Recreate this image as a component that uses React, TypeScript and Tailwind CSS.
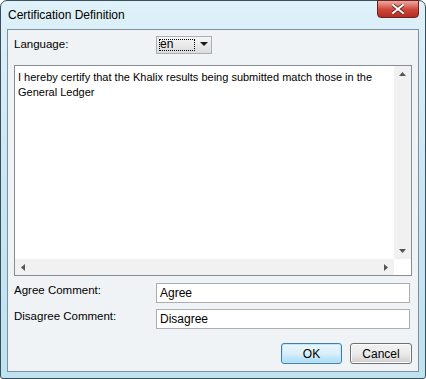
import React from 'react';

const App = () => {
  return (
    <div
      className="w-[426px] h-[379px] bg-white overflow-hidden"
      style={{ fontFamily: '"Liberation Sans", Arial, sans-serif' }}
    >
      <div className="w-[426px] h-[379px] flex flex-col border border-[#3b4e5c] rounded-t-[7px] rounded-b-[3px] bg-gradient-to-b from-[#dff1f9] via-[#c8e6f3] to-[#bfe2f1]">
        {/* title bar */}
        <div className="h-[28px] flex items-start justify-between pl-[7px] pr-[6px]">
          <span className="text-[12px] text-black leading-none mt-[8px]">Certification Definition</span>
          <div className="w-[42px] h-[18px] mt-[-1px] rounded-b-[4px] border border-[#6b2222] bg-gradient-to-b from-[#eba9a1] via-[#d04a3e] to-[#b52c22] flex items-center justify-center">
            <svg width="12" height="10" viewBox="0 0 12 10">
              <path d="M1 1 L11 9 M11 1 L1 9" stroke="#5a1a14" strokeWidth="3.4" strokeLinecap="square" />
              <path d="M1 1 L11 9 M11 1 L1 9" stroke="#ffffff" strokeWidth="2" strokeLinecap="square" />
            </svg>
          </div>
        </div>

        {/* client area */}
        <div className="flex-1 mx-[6px] mb-[6px] border border-[#7b8fa0] bg-[#f0f3f6] flex flex-col px-[6px] text-[11.5px] text-black">
          <div className="flex items-center h-[17px] mt-[6px]">
            <span className="w-[142px] leading-none">Language:</span>
            <div className="w-[56px] h-[18px] border border-[#a8aeb3] bg-gradient-to-b from-[#f6f6f6] to-[#dcdcdc] flex items-center p-[2px]">
              <div className="w-[36px] h-[12px] border border-dotted border-black flex items-center leading-none text-[12px] pb-[1px]">en</div>
              <svg className="ml-[5px]" width="8" height="5" viewBox="0 0 8 5">
                <path d="M0 0 L8 0 L4 4 Z" fill="#1a1a1a" />
              </svg>
            </div>
          </div>

          {/* text area */}
          <div className="mt-[12px] h-[211px] border border-[#868d94] bg-white flex flex-col">
            <div className="flex flex-1">
              <div className="flex-1 px-[3px] pt-[4px] text-[11px] leading-[15px]">
                I hereby certify that the Khalix results being submitted match those in the General Ledger
              </div>
              <div className="w-[17px] bg-[#f1f1f1] flex flex-col items-center justify-between py-[6px]">
                <svg width="7" height="4" viewBox="0 0 7 4"><path d="M0 4 L7 4 L3.5 0 Z" fill="#555" /></svg>
                <svg width="7" height="4" viewBox="0 0 7 4"><path d="M0 0 L7 0 L3.5 4 Z" fill="#555" /></svg>
              </div>
            </div>
            <div className="h-[16px] flex">
              <div className="flex-1 bg-[#f1f1f1] flex items-center justify-between px-[6px]">
                <svg width="4" height="7" viewBox="0 0 4 7"><path d="M4 0 L4 7 L0 3.5 Z" fill="#555" /></svg>
                <svg width="4" height="7" viewBox="0 0 4 7"><path d="M0 0 L0 7 L4 3.5 Z" fill="#555" /></svg>
              </div>
              <div className="w-[17px] bg-white" />
            </div>
          </div>

          <div className="flex items-center mt-[7px] h-[20px]">
            <span className="w-[142px] leading-none mb-[4px]">Agree Comment:</span>
            <div className="flex-1 h-[20px] border border-[#abadb3] bg-white flex items-center px-[3px] mr-[2px] text-[12px]">Agree</div>
          </div>
          <div className="flex items-center mt-[6px] h-[20px]">
            <span className="w-[142px] leading-none mb-[4px]">Disagree Comment:</span>
            <div className="flex-1 h-[20px] border border-[#abadb3] bg-white flex items-center px-[3px] mr-[2px] text-[12px]">Disagree</div>
          </div>

          <div className="flex justify-end gap-[8px] mt-[14px]">
            <button className="w-[61px] h-[21px] rounded-[3px] border border-[#3c7fb1] bg-gradient-to-b from-[#eaf6fd] via-[#d9f0fc] to-[#a7d9f5] shadow-[inset_0_0_0_1px_#c3e6f7] text-[12px] leading-none">OK</button>
            <button className="w-[62px] h-[21px] rounded-[3px] border border-[#707070] bg-gradient-to-b from-[#f2f2f2] via-[#ebebeb] to-[#cfcfcf] shadow-[inset_0_0_0_1px_#fbfbfb] text-[12px] leading-none">Cancel</button>
          </div>
        </div>
      </div>
    </div>
  );
};

export default App;
